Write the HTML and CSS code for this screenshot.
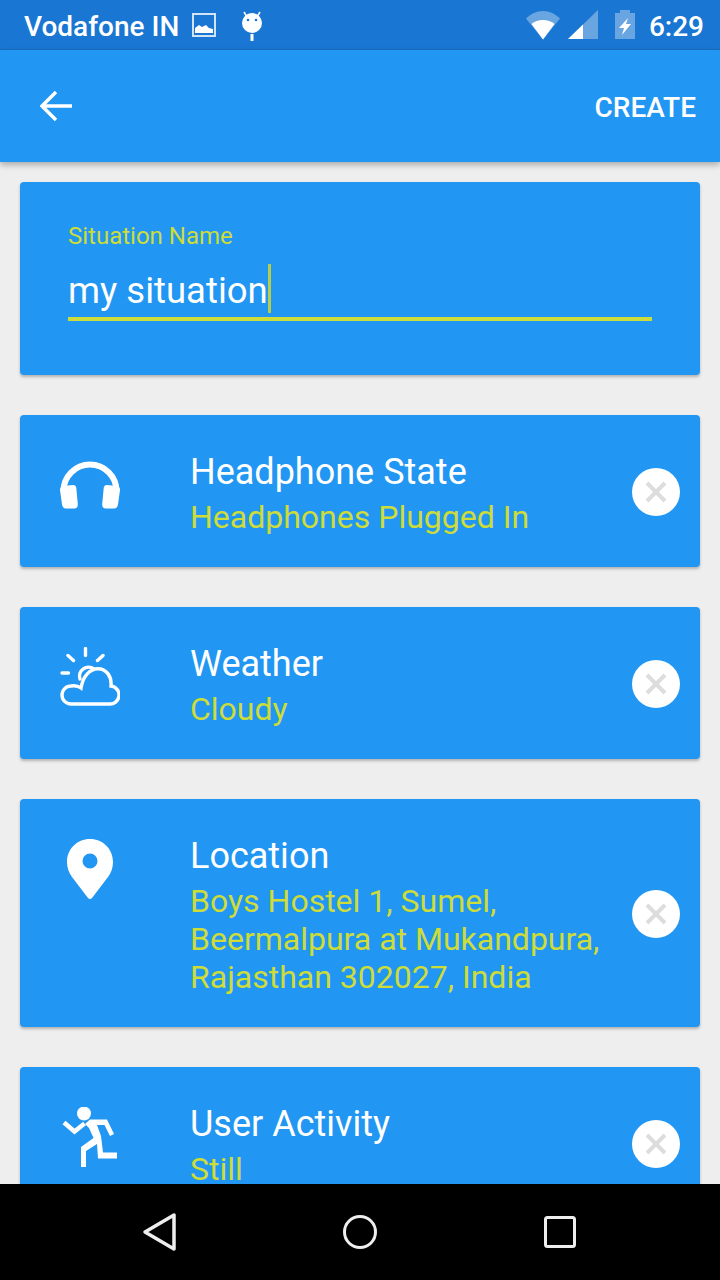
FILE: index.html
```html
<!DOCTYPE html>
<html lang="en">
<head>
<meta charset="utf-8">
<title>Create Situation</title>
<link rel="stylesheet" href="styles.css">
</head>
<body>
<div class="screen">
  <header class="status">
    <div class="status-left">
      <span class="carrier">Vodafone IN</span>
      <svg class="st-image" viewBox="0 0 24 24"><rect x="1" y="1" width="22" height="22" fill="none" stroke="#fff" stroke-opacity=".8" stroke-width="2"/><path d="M3 20v-5l4-3 3 2 4-2 3 3 4 1v4z" fill="#fff"/></svg>
      <svg class="st-droid" viewBox="0 0 24 32"><path d="M4 2l3 5M20 2l-3 5" stroke="#fff" stroke-width="1.6"/><circle cx="12" cy="13" r="10" fill="#fff"/><circle cx="8" cy="10" r="1.3" fill="#1976D2"/><circle cx="16" cy="10" r="1.3" fill="#1976D2"/><rect x="10.5" y="24" width="3" height="7" fill="#fff"/></svg>
    </div>
    <div class="status-right">
      <svg class="st-wifi" viewBox="0 0 34 29"><path d="M0 7.500C4.500 3 10.500 0 17 0s12.500 3 17 7.500L17 28.500z" fill="#fff" fill-opacity=".35"/><path d="M5.500 13C8.500 10.500 12.500 9 17 9s8.500 1.500 11.500 4L17 28.500z" fill="#fff"/></svg>
      <svg class="st-signal" viewBox="0 0 30 29"><path d="M0 29L30 0v29z" fill="#fff" fill-opacity=".35"/><path d="M0 29L15 14.500V29z" fill="#fff"/></svg>
      <svg class="st-battery" viewBox="0 0 20 29"><path d="M5 0h10v3h5v26H0V3h5z" fill="#fff" fill-opacity=".35"/><path d="M13 8L4 18h5l-2 7 9-11h-5z" fill="#fff"/></svg>
      <span class="clock">6:29</span>
    </div>
  </header>
  <div class="appbar">
    <svg class="back" viewBox="0 0 34 32"><path d="M32 16H3M16 2L2 16l14 14" fill="none" stroke="#fff" stroke-width="3.400"/></svg>
    <span class="create">CREATE</span>
  </div>
  <main class="content">
    <section class="card name-card">
      <div class="label">Situation Name</div>
      <div class="input"><span>my situation</span><i class="caret"></i></div>
    </section>
    <section class="card row">
      <svg class="icon" viewBox="60 455 60 60"><path d="M63.500 491A26.500 26.500 0 0 1 116.500 491" fill="none" stroke="#fff" stroke-width="6"/><path d="M63 486l10-1q3 0 3.300 3l1.500 16q.2 4-3 4.500h-9q-3 0-3.800-4L60 490q0-3.500 3-4zM117 486l-10-1q-3 0-3.300 3l-1.500 16q-.2 4 3 4.500h9q3 0 3.800-4l2-14.500q0-3.500-3-4z" fill="#fff"/></svg>
      <div class="texts"><div class="title">Headphone State</div><div class="sub">Headphones Plugged In</div></div>
      <button class="close"><svg viewBox="0 0 48 48"><path d="M15 15l18 18M33 15L15 33" stroke="#ddd" stroke-width="4"/></svg></button>
    </section>
    <section class="card row">
      <svg class="icon" viewBox="60 647 60 60"><g fill="none" stroke="#fff" stroke-width="3.400" stroke-linecap="round"><path d="M71 704A9 9 0 0 1 71 686Q77 685 81 688C83 676 90 668.700 98 668.700C106 668.700 112 676 111 686A9 9 0 0 1 109 704z"/><path d="M80 679A9 9 0 0 1 94 669"/><path d="M85.500 648.500V655.500M68 655.500l5.500 5M103 655.500l-5.500 5M62 673H68.500"/></g></svg>
      <div class="texts"><div class="title">Weather</div><div class="sub">Cloudy</div></div>
      <button class="close"><svg viewBox="0 0 48 48"><path d="M15 15l18 18M33 15L15 33" stroke="#ddd" stroke-width="4"/></svg></button>
    </section>
    <section class="card row">
      <svg class="icon" viewBox="60 839 60 60"><path fill-rule="evenodd" d="M90 839C77 839 67 849 67 862C67 868 69 873 72 877L88 898Q90 900 92 898L108 877C111 873 113 868 113 862C113 849 103 839 90 839ZM90 853.500a7.500 7.500 0 1 1 0 15a7.500 7.500 0 1 1 0-15Z" fill="#fff"/></svg>
      <div class="texts"><div class="title">Location</div><div class="sub">Boys Hostel 1, Sumel, Beermalpura at Mukandpura, Rajasthan 302027, India</div></div>
      <button class="close"><svg viewBox="0 0 48 48"><path d="M15 15l18 18M33 15L15 33" stroke="#ddd" stroke-width="4"/></svg></button>
    </section>
    <section class="card row">
      <svg class="icon" viewBox="60 1107 60 60"><circle cx="84" cy="1113.500" r="7" fill="#fff"/><path d="M64 1122.500l10.500 9 10-8" fill="none" stroke="#fff" stroke-width="4.500"/><path d="M85 1124L90 1119.500H107L114 1134L110 1136L104.500 1125H97L101 1136L103 1152.500H117V1158.500H98L97 1144L86 1151V1167H81V1147L93.500 1138L89 1128Z" fill="#fff"/></svg>
      <div class="texts"><div class="title">User Activity</div><div class="sub">Still</div></div>
      <button class="close"><svg viewBox="0 0 48 48"><path d="M15 15l18 18M33 15L15 33" stroke="#ddd" stroke-width="4"/></svg></button>
    </section>
  </main>
  <nav class="navbar">
    <svg class="nav-back" viewBox="0 0 36 40"><path d="M3 20L32 3V37z" fill="none" stroke="#eee" stroke-width="3.500" stroke-linejoin="round"/></svg>
    <svg class="nav-home" viewBox="0 0 36 36"><circle cx="18" cy="18" r="15.500" fill="none" stroke="#eee" stroke-width="3"/></svg>
    <svg class="nav-recent" viewBox="0 0 32 32"><rect x="1.500" y="1.500" width="29" height="29" rx="2" fill="none" stroke="#eee" stroke-width="3"/></svg>
  </nav>
</div>
</body>
</html>
```
FILE: styles.css
```css
* { box-sizing: border-box; }
html, body { margin: 0; padding: 0; }
body { font-family: Roboto, "Liberation Sans", sans-serif; background: #eee; }
.screen { width: 720px; height: 1280px; display: flex; flex-direction: column; overflow: hidden; }
.status { height: 50px; flex: none; background: #1976D2; color: #fff; display: flex; justify-content: space-between; align-items: center; padding: 0 16px 0 24px; border-bottom: 1px solid #1a6cc0; }
.status-left, .status-right { display: flex; align-items: center; }
.carrier { font-size: 28px; font-weight: 500; line-height: 50px; padding-top: 4px; }
.st-image { width: 24px; height: 24px; margin-left: 13px; }
.st-droid { width: 24px; height: 32px; margin-left: 24px; margin-top: 2px; }
.st-wifi { width: 34px; height: 29px; margin-top: 1px; }
.st-signal { width: 30px; height: 29px; margin-left: 8px; }
.st-battery { width: 20px; height: 29px; margin-left: 17px; }
.clock { font-size: 28px; font-weight: 500; margin-left: 14px; line-height: 50px; padding-top: 4px; }
.appbar { height: 112px; flex: none; background: #2196F3; display: flex; justify-content: space-between; align-items: center; padding: 0 24px 0 40px; box-shadow: 0 3px 6px rgba(0,0,0,.28); position: relative; z-index: 2; }
.back { width: 34px; height: 32px; }
.create { color: #fff; font-size: 28px; font-weight: 500; padding-top: 2px; }
.content { flex: 1; min-height: 0; overflow: hidden; padding: 20px 20px 0; display: flex; flex-direction: column; gap: 40px; }
.card { flex: none; background: #2196F3; border-radius: 4px; box-shadow: 0 2px 3px rgba(0,0,0,.25); }
.name-card { height: 193px; padding: 38px 48px 0; }
.label { font-size: 24px; line-height: 32px; color: #CDDC39; }
.input { height: 53px; margin-top: 12px; border-bottom: 4px solid #CDDC39; box-sizing: content-box; display: flex; align-items: flex-start; color: #fff; font-size: 36.5px; line-height: 44px; }
.input span { padding-top: 5px; }
.caret { display: block; width: 3px; height: 49px; background: #b5cf4c; }
.row { display: flex; align-items: flex-start; padding: 0 20px 0 40px; }
.icon { width: 60px; height: 60px; flex: none; margin-top: 40px; }
.texts { flex: 1; min-width: 0; margin-left: 70px; padding: 36px 0 31px; }
.title { color: #fff; font-size: 36px; line-height: 42px; }
.sub { color: #CDDC39; font-size: 32px; line-height: 38px; margin-top: 5px; }
.close { flex: none; width: 48px; height: 48px; padding: 0; border: 0; border-radius: 50%; background: #fff; align-self: center; margin-top: 2px; }
.close svg { display: block; width: 48px; height: 48px; }
.navbar { height: 96px; flex: none; background: #000; position: relative; z-index: 3; display: grid; grid-template-columns: repeat(3, 200px); justify-content: center; justify-items: center; align-items: center; }
.nav-back { width: 36px; height: 40px; }
.nav-home { width: 36px; height: 36px; }
.nav-recent { width: 32px; height: 32px; }
```
